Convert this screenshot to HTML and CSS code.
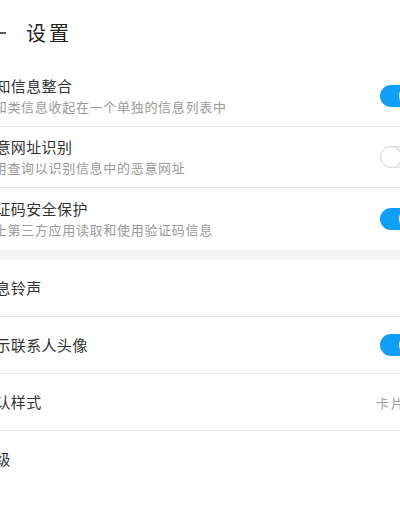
FILE: index.html
```html
<!DOCTYPE html>
<html lang="zh-CN">
<head>
<meta charset="utf-8">
<title>设置</title>
<link rel="stylesheet" href="styles.css">
</head>
<body>
<div class="page">
  <header class="header">
    <svg class="back" width="26" height="20" viewBox="0 0 26 20"><path d="M2 10H26M2 10L10 2M2 10L10 18" fill="none" stroke="#222" stroke-width="1.6"/></svg>
    <h1 class="title">设置</h1>
  </header>

  <section class="group">
    <div class="row two">
      <div class="text">
        <div class="label">通知信息整合</div>
        <div class="desc">通知类信息收起在一个单独的信息列表中</div>
      </div>
      <span class="switch on"><span class="knob"></span></span>
    </div>
    <div class="row two">
      <div class="text">
        <div class="label">恶意网址识别</div>
        <div class="desc">启用查询以识别信息中的恶意网址</div>
      </div>
      <span class="switch off"><span class="knob"></span></span>
    </div>
    <div class="row two last">
      <div class="text">
        <div class="label">验证码安全保护</div>
        <div class="desc">禁止第三方应用读取和使用验证码信息</div>
      </div>
      <span class="switch on"><span class="knob"></span></span>
    </div>
  </section>

  <div class="band"></div>

  <section class="group">
    <div class="row one">
      <div class="label">信息铃声</div>
    </div>
    <div class="row one">
      <div class="label">显示联系人头像</div>
      <span class="switch on"><span class="knob"></span></span>
    </div>
    <div class="row one">
      <div class="label">默认样式</div>
      <div class="value">卡片<svg class="chev" width="8" height="12" viewBox="0 0 8 12"><path d="M1 1L6 6L1 11" fill="none" stroke="#bbb" stroke-width="1.4"/></svg></div>
    </div>
    <div class="row one last">
      <div class="label">高级</div>
    </div>
  </section>
</div>
</body>
</html>
```
FILE: styles.css
```css
html, body {
  margin: 0;
  padding: 0;
  background: #fff;
  overflow: hidden;
}
body {
  font-family: "Noto Sans CJK SC", "Noto Sans", sans-serif;
  color: #333;
}
.page {
  width: 480px;
  margin-left: -40px;
}
.header {
  height: 66px;
  display: flex;
  align-items: center;
  gap: 20px;
  padding: 0 20px;
}
.back { display: block; }
.title {
  margin: 0;
  font-size: 20px;
  font-weight: 400;
  letter-spacing: 3px;
  color: #222;
  line-height: 26px;
}
.row {
  display: flex;
  align-items: center;
  justify-content: space-between;
  padding: 0 20px;
  border-bottom: 1px solid #e8e8e8;
}
.row.last { border-bottom: none; }
.row.two { height: 60px; }
.row.two.last { height: 62px; }
.row.one { height: 56px; }
.text { display: flex; flex-direction: column; }
.label {
  font-size: 15px;
  line-height: 20px;
  letter-spacing: 0.4px;
  color: #333;
}
.desc {
  margin-top: 2px;
  font-size: 13px;
  line-height: 18px;
  letter-spacing: 0.7px;
  color: #9a9a9a;
}
.band {
  height: 10px;
  background: #f4f4f4;
}
.switch {
  position: relative;
  width: 40px;
  height: 22px;
  border-radius: 11px;
  box-sizing: border-box;
  flex: none;
}
.switch.on { background: #0fa0f5; }
.switch.on .knob {
  position: absolute;
  top: 1px;
  right: 1px;
  width: 20px;
  height: 20px;
  border-radius: 50%;
  background: #fff;
}
.switch.off {
  background: #f2f2f2;
  border: 1px solid #e2e2e2;
}
.switch.off .knob {
  position: absolute;
  top: -1px;
  left: -1px;
  width: 22px;
  height: 22px;
  box-sizing: border-box;
  border-radius: 50%;
  background: #fff;
  border: 1.5px solid #d8d8d8;
}
.value {
  display: flex;
  align-items: center;
  gap: 6px;
  font-size: 13px;
  letter-spacing: 2px;
  color: #a0a0a0;
}
.chev { display: block; }
```
